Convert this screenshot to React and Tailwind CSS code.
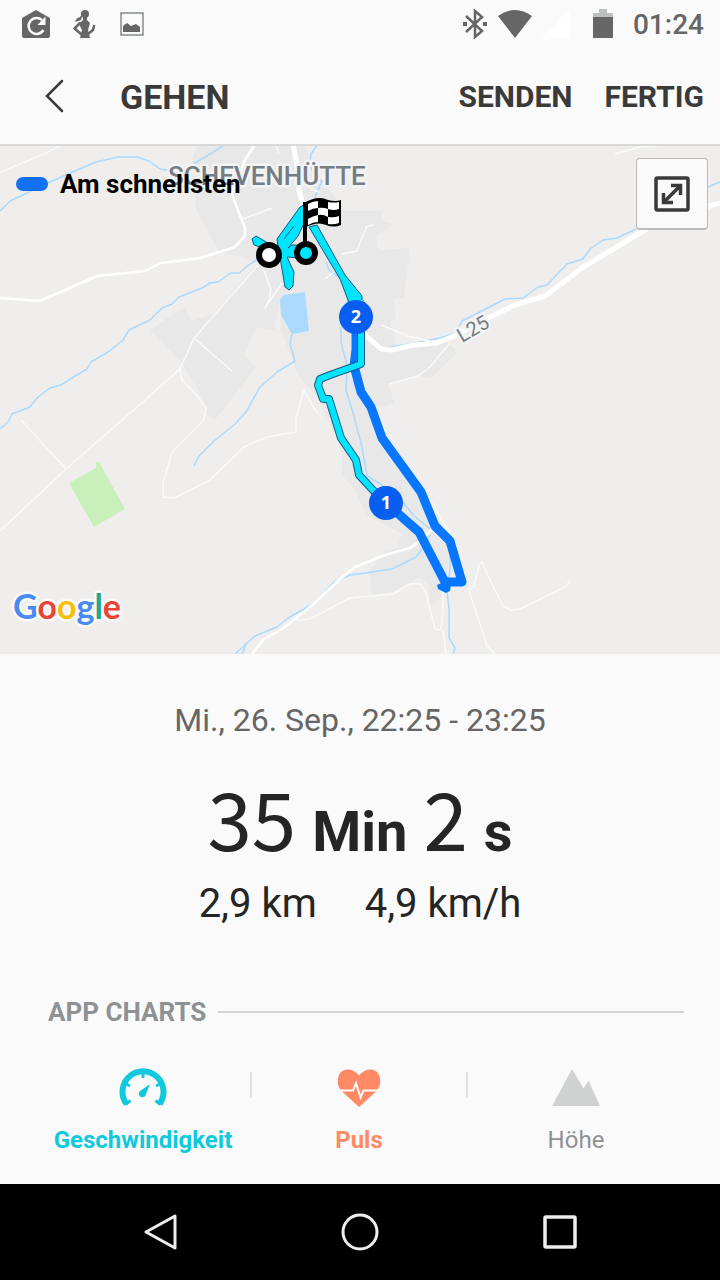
import React from "react";

const CHARTS = [
  { id: "speed", label: "Geschwindigkeit", style: "font-bold text-[#10c9dc]", icon: <SpeedIcon /> },
  { id: "pulse", label: "Puls", style: "font-bold text-[#ff8a65]", icon: <PulseIcon /> },
  { id: "height", label: "Höhe", style: "font-normal text-[#8f9294]", icon: <HeightIcon /> },
];

function SpeedIcon() {
  return (
    <svg className="w-12 h-10" viewBox="0 0 48 40" fill="none">
      <path d="M7.500 36A20.500 20.500 0 1 1 40.500 36" stroke="#10c9dc" strokeWidth="6" />
      <path d="M24 4v6M7 16l4 2M41 16l-4 2M6.500 36.500l5-4M41.500 36.500l-5-4" stroke="#10c9dc" strokeWidth="3" />
      <path d="M31 16L27 26a3.600 3.600 0 1 1-6-3Z" fill="#10c9dc" />
    </svg>
  );
}

function PulseIcon() {
  return (
    <svg className="w-12 h-10" viewBox="0 0 48 40" fill="none">
      <path
        d="M24 39L7 23.500C2.500 19 2 13 3.500 8.500C6 0 17-1 24 7.500C31-1 42 0 44.500 8.500C46 13 45.500 19 41 23.500Z"
        fill="#ff8a65"
      />
      <path d="M4 22.500H18L21 15L25.500 29.500L28.500 22.500H44" stroke="#fafafa" strokeWidth="2" />
    </svg>
  );
}

function HeightIcon() {
  return (
    <svg className="w-12 h-10" viewBox="0 0 48 40">
      <path d="M0 38L20 1L31.500 20.500L36.500 12.500L48 38Z" fill="#d0d2d1" />
    </svg>
  );
}

function StatusBar() {
  return (
    <div className="h-12 pl-5 pr-4 flex items-center justify-between text-[#666]">
      <div className="flex items-center gap-4">
        <svg className="w-8 h-8" viewBox="0 0 32 32">
          <path d="M16 2L30 10V28q0 2-2 2H4q-2 0-2-2V10Z" fill="currentColor" />
          <path d="M22 12A8 8 0 1 0 23.500 22" stroke="#fafafa" strokeWidth="2.500" fill="none" />
          <path d="M25.500 8.500V17H17.500Z" fill="#fafafa" />
        </svg>
        <svg className="w-8 h-8" viewBox="0 0 32 32" fill="none" stroke="currentColor" strokeLinecap="round" strokeLinejoin="round">
          <circle cx="17" cy="6" r="4" fill="currentColor" stroke="none" />
          <path d="M15 5L13 12L7 14Q8 10 12 9Z" fill="currentColor" stroke="none" />
          <path d="M15 9H19V12L22 15L20 22L22 30H12L14 22L11 16L15 12Z" fill="currentColor" stroke="none" />
          <path d="M12 15L6.500 20.500L13 26M20 26L25 22L26 18" strokeWidth="2.500" />
        </svg>
        <svg className="w-8 h-8" viewBox="0 0 32 32" fill="none">
          <path d="M5 5H27V27H5Z" stroke="#858c90" strokeWidth="1.500" />
          <path d="M7 24V18l4-3l4 3l5-2l4 3v5Z" fill="currentColor" />
        </svg>
      </div>
      <div className="flex items-center">
        <svg className="w-8 h-8" viewBox="0 0 32 32" fill="none" stroke="currentColor" strokeWidth="2.500">
          <path d="M7 8L23 23L16 29V3L23 9L7 24" />
          <path d="M4 16h4M24 16h4" strokeWidth="4" />
        </svg>
        <svg className="w-10 h-8 ml-1" viewBox="0 0 40 32">
          <path d="M3 8Q20-4 37 8L20 30Z" fill="currentColor" />
        </svg>
        <svg className="w-8 h-8 ml-1.5" viewBox="0 0 32 32">
          <path d="M29 1V31H0Z" fill="#fff" />
        </svg>
        <svg className="w-5 h-8 ml-5" viewBox="0 0 20 32">
          <path d="M0 5h6V1h8v4h6v5H0Z" fill="#bdc0c0" />
          <path d="M0 9h20v21H0Z" fill="currentColor" />
        </svg>
        <span className="ml-5 pt-0.5 text-[28px] leading-8 font-medium">01:24</span>
      </div>
    </div>
  );
}

function Header() {
  return (
    <header className="h-24 pl-9 pr-4 flex items-center text-[#3a3a3a]">
      <button type="button" aria-label="Zurück" className="w-9 h-12 flex items-center justify-center">
        <svg className="w-6 h-9" viewBox="0 0 24 36" fill="none">
          <path d="M20 3L5 18L20 33" stroke="currentColor" strokeWidth="2.500" strokeLinecap="round" />
        </svg>
      </button>
      <h1 className="ml-12 pt-0.5 text-[34px] leading-10 font-bold">GEHEN</h1>
      <div className="ml-auto pt-0.5 flex gap-8 text-[30px] leading-10 font-bold">
        <button type="button">SENDEN</button>
        <button type="button">FERTIG</button>
      </div>
    </header>
  );
}

function RouteMap() {
  return (
    <svg className="block w-full h-auto" viewBox="0 144 720 510" fill="none" strokeLinejoin="round">
      <rect y="144" width="720" height="510" fill="#efeeec" />

      {/* built-up areas */}
      <g fill="#e8e8e8">
        <path d="M197 146H305L318 175L345 211H382V221L393 224L376 236L379 250L410 248L404 297L393 300L396 320L390 321L396 345L445 341L458 352L432 377L420 376L388 384L394 402L382 408L370 404L380 438L425 500L450 540L446 590L435 604L429 606V585L420 577L393 592L372 595L369 572L385 550L397 548L402 534L366 515L355 490L342 475V450L318 398L298 375L281 330L280 300L274 330L256 327L244 355L256 367L215 420L206 414L204 400L180 361L150 330L184 307L192 321L214 313L258 262L219 251L196 210L192 160Z" />
      </g>
      <path d="M280 300L284 295L305 292L309 331L292 334L281 315Z" fill="#aadaff" />
      <path d="M69 483L96 468V462H99L125 509L94 527Z" fill="#c9efbb" />

      {/* streams */}
      <g stroke="#aadaff" strokeWidth="1.500">
        <path d="M0 211L10 201L25 194L50 182L75 171L96 162L118 157H137L149 161L160 169L180 172L205 157L226 144" />
        <path d="M318 144L311 154L310 164L314 176L322 181L318 190L314 200" />
        <path d="M0 429L8 422L12 414L30 407L37 398L50 388L61 385L75 376L87 369L91 362L108 352L123 340L129 330L150 320L162 308L172 304L179 297L202 288L210 283L218 282L231 273H239L250 264L258 259" />
        <path d="M292 334L290 344L295 361L277 372L260 387L246 412L235 424L214 441L199 456L194 466" />
        <path d="M341 327V342L347 365L346 390L353 413L362 447L367 476L382 485L402 501L414 516L433 531" />
        <path d="M326 262L329 270L340 278" />
        <path d="M235 654L246 644L255 636L277 627L288 618L311 605L323 594L334 582L350 575L365 573L392 569L416 557L423 548L430 535" />
        <path d="M242 654L246 644M450 550V570L447 590L449 610V638L455 648L453 654" />
        <path d="M378 349L410 344L440 338L456 333L462 321L472 316L505 299L523 298L538 287L547 285L567 264L583 259L590 249L603 240L617 238L636 229M708 187L720 182" />
      </g>

      {/* roads */}
      <g stroke="#fafafa" strokeWidth="1.500">
        <path d="M0 172L30 160L50 151L62 145M243 219L272 208M310 189L319 192M275 144L279 153M615 154L640 147L660 145" />
        <path d="M258 265L210 320L194 338L180 369L145 400L66 469L0 531" />
        <path d="M21 420L66 469M194 338L232 371M180 369L182 380L198 397L206 408L204 420L190 434L172 452L163 483L163 497L174 498L210 480L244 447L267 437L296 432V418L304 390L317 413" />
        <path d="M263 268L271 290L269 300L265 308L271 299L282 283M342 254L357 251L361 240L367 226L374 225M325 279L334 272" />
        <path d="M381 325L408 336L434 342M449 344L430 367L418 376L389 384" />
        <path d="M297 620L310 619L350 598L393 594L410 584H420L426 592L435 629L441 630L443 610V590M443 630L446 654" />
        <path d="M468 590L474 586L479 565L482 562L490 580L503 606L511 610L520 609L565 587L570 581M468 588L477 615L487 646L495 654" />
        <path d="M352 342L358 385M432 503L450 534" />
      </g>
      <g stroke="#fff" strokeWidth="2.500">
        <path d="M0 298L40 301L97 276L145 271L161 263L200 258L235 247L245 236V228L236 205L232 193L245 160L254 146" />
        <path d="M252 654L264 639L282 629L310 607L340 579L355 567L385 555L410 548L422 540L438 522" />
      </g>
      <path d="M293 144L296 160L299 190L307 220" stroke="#fff" strokeWidth="5" />
      <path d="M360 330L381 349L392 350L414 345L437 343L456 335L480 322L515 305L545 296L582 268L625 242L668 216L700 209L720 203" stroke="#fff" strokeWidth="5" />

      {/* place names */}
      <g fontFamily="Roboto, sans-serif" className="[paint-order:stroke]" stroke="#f3f3f3" strokeWidth="5">
        <text x="168" y="185" fontSize="26" fontWeight="500" fill="#747c84">SCHEVENHÜTTE</text>
        <text x="462" y="343" fontSize="20" fill="#747c84" transform="rotate(-30 462 343)">L25</text>
      </g>

      {/* fast part of the route */}
      <path d="M356 330V350L354 366L361 392L371 407L382 438L421 492L435 526L450 541L462 582H445L419 532L386 503" stroke="#0877ff" strokeWidth="9" />
      <path d="M437 585L444 582L451 584L450 591L446 593L438 589Z" fill="#0877ff" />

      {/* walked part of the route */}
      <g stroke="#145a80" strokeWidth="1" fill="#00e5ff">
        <path d="M252 239L256 236L268 243L278 246L277 239L300 207L306 204L307 217L298 236L288 248L292 245H300V258L287 257L294 272L293 286L289 290L285 287L280 257L266 249L254 245Z" />
        <path d="M309 227L317 225L345 275L362 296V314H350L348 300L340 279Z" />
      </g>
      <path d="M361 302V364L330 375L320 379L318 385L323 399H329L341 438L356 460L359 475L384 502" stroke="#145a80" strokeWidth="8" />
      <path d="M361 300V364L330 375L320 379L318 385L323 399H329L341 438L356 460L359 475L384 502" stroke="#00e5ff" strokeWidth="6" />
      <path d="M284 239L294 226" stroke="#145a80" />

      {/* start and finish */}
      <circle cx="269" cy="255" r="10" fill="#fff" stroke="#000" strokeWidth="6" />
      <path d="M305 202V244" stroke="#000" strokeWidth="4" />
      <path d="M304 203Q318 195 328 200Q336 202 341 200V225Q334 228 326 225Q318 221 306 227Z" fill="#000" />
      <path
        d="M308 204Q313 201 318 201V208Q313 208 308 211ZM328 202Q334 203 339 202V209Q334 211 328 209ZM318 208Q323 207 328 209V217Q323 214 318 215ZM308 219Q313 216 318 215V222Q313 222 308 225ZM328 217Q334 218 339 216V223Q334 225 328 224Z"
        fill="#fff"
      />
      <circle cx="306" cy="253" r="9" fill="#00e5ff" stroke="#000" strokeWidth="6" />

      {/* kilometre marks */}
      <g fontFamily="Open Sans, sans-serif" fontSize="18" fontWeight="700" textAnchor="middle">
        <circle cx="356" cy="317" r="17" fill="#075ef0" />
        <text x="356" y="323" fill="#fff">2</text>
        <circle cx="386" cy="503" r="17" fill="#075ef0" />
        <text x="386" y="509" fill="#fff">1</text>
      </g>

      <text
        x="13"
        y="619"
        fontFamily="Lato, sans-serif"
        fontSize="34"
        fontWeight="700"
        stroke="#fafafa"
        strokeWidth="5"
        className="[paint-order:stroke]"
      >
        <tspan fill="#4a8af4">G</tspan>
        <tspan fill="#eb4335">o</tspan>
        <tspan fill="#fbbc05">o</tspan>
        <tspan fill="#4a8af4">g</tspan>
        <tspan fill="#27a68c">l</tspan>
        <tspan fill="#eb4335">e</tspan>
      </text>
    </svg>
  );
}

function MapPanel() {
  return (
    <section className="relative">
      <RouteMap />
      <div className="absolute inset-x-0 top-0 h-0.5 bg-[#d8d8d8]" />
      <div className="absolute left-4 top-6 flex items-center gap-3">
        <span className="w-8 h-3.5 rounded-full bg-[#1271f5]" />
        <span className="text-[26px] leading-8 font-bold text-black">Am schnellsten</span>
      </div>
      <button
        type="button"
        aria-label="Karte vergrößern"
        className="absolute right-3 top-3.5 w-18 h-18 flex items-center justify-center rounded-sm bg-[#fafafa] border border-b-2 border-[#b9bbbc]"
      >
        <svg className="w-9 h-9" viewBox="0 0 36 36" fill="none" stroke="#3a3a3a">
          <rect x="2" y="2" width="32" height="32" rx="1.500" strokeWidth="3.500" />
          <path d="M10 26L26 10" strokeWidth="3.500" />
          <path d="M17 9.500H26.500V19M9.500 17V26.500H19" strokeWidth="3.500" />
        </svg>
      </button>
    </section>
  );
}

function Summary() {
  return (
    <section className="pt-11 flex flex-col items-center text-[#252525]">
      <p className="pt-0.5 text-[32px] leading-10 text-[#666]">Mi., 26. Sep., 22:25 - 23:25</p>
      <p className="mt-6 mb-3 h-26 flex items-baseline gap-4 text-[56px] leading-26 font-bold">
        <span className="font-['Noto_Sans_CJK_JP',sans-serif] text-[80px] leading-26 font-normal">35</span>
        <span>Min</span>
        <span className="font-['Noto_Sans_CJK_JP',sans-serif] text-[80px] leading-26 font-normal">2</span>
        <span>s</span>
      </p>
      <p className="flex gap-12 text-[40px] leading-12">
        <span>2,9 km</span>
        <span>4,9 km/h</span>
      </p>
    </section>
  );
}

function ChartTabs() {
  return (
    <section className="pt-16 pb-4 px-9">
      <div className="pl-3 flex items-center gap-3">
        <h2 className="text-[26px] leading-10 font-bold text-[#8f9294]">APP CHARTS</h2>
        <div className="flex-1 h-0.5 bg-[#d3d4d4]" />
      </div>
      <div className="pt-9 grid grid-cols-3">
        {CHARTS.map((chart, i) => (
          <div key={chart.id} className="flex">
            <button type="button" className={`flex-1 flex flex-col items-center gap-4 text-2xl ${chart.style}`}>
              {chart.icon}
              <span>{chart.label}</span>
            </button>
            {i < CHARTS.length - 1 && <span className="mt-1 w-0.5 h-6.5 bg-[#e0e0e0]" />}
          </div>
        ))}
      </div>
    </section>
  );
}

function NavBar() {
  return (
    <nav className="mt-auto h-24 bg-black flex items-center justify-center gap-40 text-[#eee]">
      <button type="button" aria-label="Zurück">
        <svg className="w-10 h-10" viewBox="0 0 40 40" fill="none" stroke="currentColor" strokeWidth="3" strokeLinejoin="round">
          <path d="M35 4V36L6 20Z" />
        </svg>
      </button>
      <button type="button" aria-label="Startseite">
        <svg className="w-10 h-10" viewBox="0 0 40 40" fill="none" stroke="currentColor" strokeWidth="3">
          <circle cx="20" cy="20" r="17" />
        </svg>
      </button>
      <button type="button" aria-label="Übersicht">
        <svg className="w-10 h-10" viewBox="0 0 40 40" fill="none" stroke="currentColor" strokeWidth="3.500">
          <rect x="5" y="5" width="30" height="30" rx="1" />
        </svg>
      </button>
    </nav>
  );
}

export default function App() {
  return (
    <div className="min-h-screen flex flex-col bg-[#fafafa] font-['Roboto',sans-serif]">
      <StatusBar />
      <Header />
      <MapPanel />
      <Summary />
      <ChartTabs />
      <NavBar />
    </div>
  );
}
